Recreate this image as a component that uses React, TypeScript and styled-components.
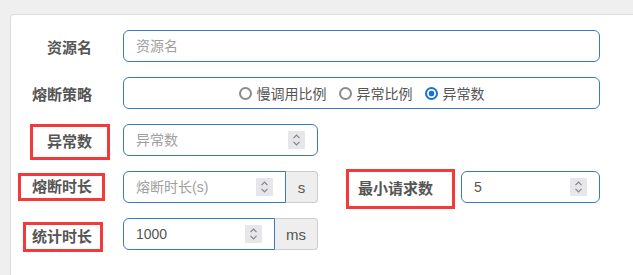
import React from 'react';
import styled, { createGlobalStyle } from 'styled-components';

const GlobalStyle = createGlobalStyle`
  body {
    margin: 0;
    background: #efefef;
    overflow: hidden;
    font-family: "Liberation Sans", "Noto Sans CJK SC", sans-serif;
  }
`;

const Card = styled.main`
  margin: 14px 0 0 10px;
  width: calc(100vw - 10px);
  height: calc(100vh - 14px);
  background: #fff;
  border: 1px solid #dcdcdc;
  border-right: none;
  border-bottom: none;
  border-radius: 4px 0 0 0;
  box-sizing: border-box;
`;

const Form = styled.form`
  display: grid;
  grid-template-columns: 96px 477px;
  grid-auto-rows: 32px;
  column-gap: 16px;
  row-gap: 15px;
  padding-top: 15px;
`;

const Label = styled.label`
  display: flex;
  justify-content: flex-end;
  align-items: center;
  padding-right: 15px;
  font-size: 15px;
  font-weight: bold;
  color: #555;
  white-space: nowrap;
`;

const InlineLabel = styled(Label)`
  flex: 1;
  padding-right: 28px;
`;

const Mark = styled.span<{ $l: number; $r: number; $v: number; $dy?: number }>`
  display: inline-block;
  line-height: 20px;
  border: 3px solid #f23a3a;
  padding: ${(p) => `${p.$v}px ${p.$r}px ${p.$v}px ${p.$l}px`};
  margin-right: ${(p) => -(p.$r + 3)}px;
  margin-left: ${(p) => -(p.$l + 3)}px;
  transform: translateY(${(p) => p.$dy ?? 0}px);
`;

const Cell = styled.div`
  display: flex;
  align-items: center;
`;

const Field = styled.div<{ $w?: number; $addon?: boolean }>`
  display: flex;
  align-items: center;
  box-sizing: border-box;
  width: ${(p) => (p.$w ? `${p.$w}px` : '100%')};
  height: 32px;
  padding: 0 12px;
  border: 1px solid #3b7bbd;
  border-radius: ${(p) => (p.$addon ? '6px 0 0 6px' : '6px')};
  background: #fff;
`;

const Input = styled.input`
  flex: 1;
  min-width: 0;
  border: none;
  outline: none;
  padding: 0;
  background: transparent;
  font: 14px "Liberation Sans", "Noto Sans CJK SC", sans-serif;
  color: #555;

  &::placeholder {
    color: #a0a0a0;
  }
`;

const Addon = styled.span<{ $w: number }>`
  display: flex;
  align-items: center;
  justify-content: center;
  box-sizing: border-box;
  width: ${(p) => p.$w}px;
  height: 32px;
  background: #eee;
  border: 1px solid #ccc;
  border-left: none;
  border-radius: 0 4px 4px 0;
  font-size: 15px;
  color: #555;
`;

const Group = styled.div`
  display: flex;
`;

const SpinBox = styled.span`
  display: flex;
  flex-shrink: 0;
  width: 17px;
  height: 18px;
  background: #e6e6eb;
  border-radius: 1px;
`;

const RadioBox = styled(Field)`
  justify-content: center;
  gap: 12px;
`;

const Option = styled.label`
  display: flex;
  align-items: center;
  gap: 5px;
  font-size: 14px;
  color: #555;
`;

const Dot = styled.span<{ $on?: boolean }>`
  box-sizing: border-box;
  width: 13px;
  height: 13px;
  border-radius: 50%;
  border: 2px solid ${(p) => (p.$on ? '#1a6fdf' : '#8a8a93')};
  background: ${(p) => (p.$on ? 'radial-gradient(circle, #1a6fdf 0 2.6px, #fff 3.2px)' : '#fff')};
`;

function Spinner() {
  return (
    <SpinBox>
      <svg width="17" height="18" viewBox="0 0 17 18" fill="none" stroke="#858585" strokeWidth="1.2">
        <path d="M5.5 7.2 8.5 4.2 11.5 7.2" />
        <path d="M5.5 10.8 8.5 13.8 11.5 10.8" />
      </svg>
    </SpinBox>
  );
}

export default function App() {
  return (
    <>
      <GlobalStyle />
      <Card>
        <Form>
          <Label>资源名</Label>
          <Cell>
            <Field>
              <Input placeholder="资源名" />
            </Field>
          </Cell>

          <Label>熔断策略</Label>
          <Cell>
            <RadioBox>
              <Option>
                <Dot />
                慢调用比例
              </Option>
              <Option>
                <Dot />
                异常比例
              </Option>
              <Option>
                <Dot $on />
                异常数
              </Option>
            </RadioBox>
          </Cell>

          <Label>
            <Mark $l={14} $r={15} $v={5} $dy={2}>异常数</Mark>
          </Label>
          <Cell>
            <Field $w={195}>
              <Input placeholder="异常数" />
              <Spinner />
            </Field>
          </Cell>

          <Label>
            <Mark $l={11} $r={10} $v={1}>熔断时长</Mark>
          </Label>
          <Cell>
            <Group>
              <Field $w={163} $addon>
                <Input placeholder="熔断时长(s)" />
                <Spinner />
              </Field>
              <Addon $w={32}>s</Addon>
            </Group>
            <InlineLabel>
              <Mark $l={9} $r={19} $v={7} $dy={2}>最小请求数</Mark>
            </InlineLabel>
            <Field $w={139}>
              <Input defaultValue="5" />
              <Spinner />
            </Field>
          </Cell>

          <Label>
            <Mark $l={6} $r={8} $v={2} $dy={3}>统计时长</Mark>
          </Label>
          <Cell>
            <Group>
              <Field $w={152} $addon>
                <Input defaultValue="1000" />
                <Spinner />
              </Field>
              <Addon $w={43}>ms</Addon>
            </Group>
          </Cell>
        </Form>
      </Card>
    </>
  );
}
